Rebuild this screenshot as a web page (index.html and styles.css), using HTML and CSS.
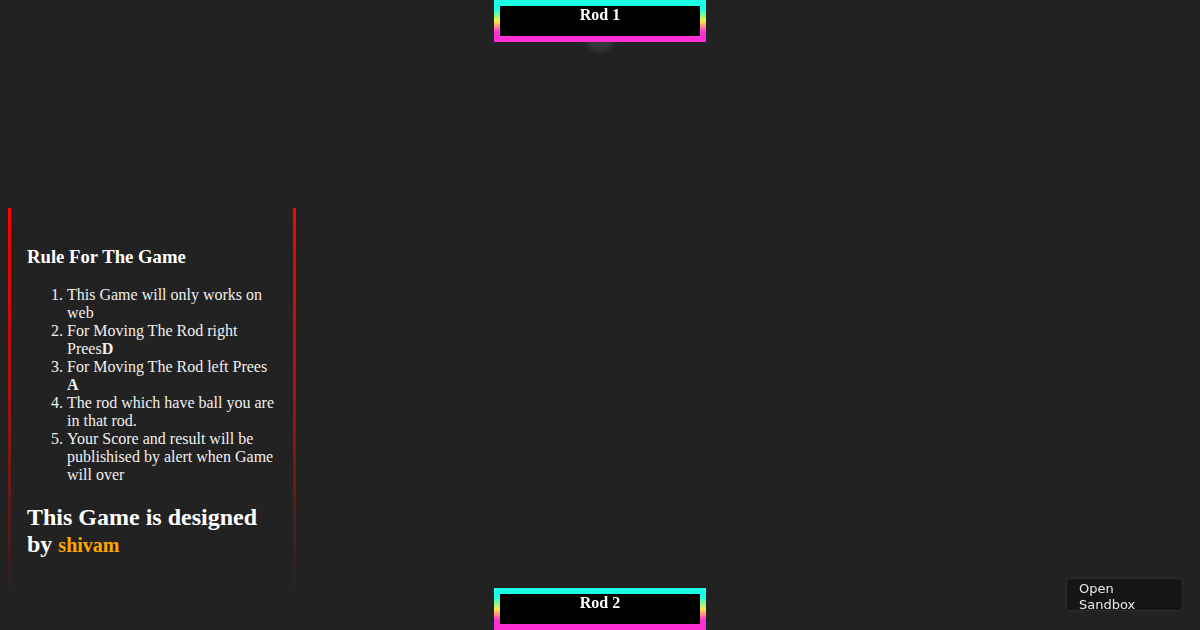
FILE: index.html
```html
<!DOCTYPE html>
<html lang="en">
<head>
<meta charset="utf-8">
<title>Ping Pong</title>
<link rel="stylesheet" href="styles.css">
</head>
<body>
<div class="game">
  <div class="ball"></div>
  <div class="rod rod-top">Rod 1</div>
  <div class="rod rod-bottom">Rod 2</div>
</div>
<section class="rules">
  <h3 class="rules-title">Rule For The Game</h3>
  <ol class="rules-list">
    <li>This Game will only works on web</li>
    <li>For Moving The Rod right Prees<b>D</b></li>
    <li>For Moving The Rod left Prees <b>A</b></li>
    <li>The rod which have ball you are in that rod.</li>
    <li>Your Score and result will be publishised by alert when Game will over</li>
  </ol>
  <h2 class="credit">This Game is designed by <span class="author">shivam</span></h2>
</section>
<a class="sandbox-btn" href="#"><span class="sandbox-label">Open Sandbox</span></a>
</body>
</html>
```
FILE: styles.css
```css
html, body {
  height: 100%;
}
body {
  margin: 0;
  padding: 208px 0 0 8px;
  box-sizing: border-box;
  background: #222222;
  color: #ffffff;
  font-family: "Liberation Serif", "Times New Roman", serif;
  overflow: hidden;
}
.game {
  position: fixed;
  inset: 0;
  pointer-events: none;
}
.rod {
  position: absolute;
  left: 494px;
  width: 200px;
  height: 30px;
  border: 6px solid transparent;
  border-image: linear-gradient(to bottom, #1affe6 0%, #1affe6 15%, #fff03a 50%, #ff2fd6 85%, #ff2fd6 100%) 1;
  background: #000000;
  color: #ffffff;
  font-weight: bold;
  font-size: 16px;
  text-align: center;
  line-height: 18px;
  z-index: 2;
}
.rod-top {
  top: 0;
}
.rod-bottom {
  bottom: 0;
}
.ball {
  position: absolute;
  left: 586px;
  top: 20px;
  width: 28px;
  height: 28px;
  border-radius: 50%;
  background: #343a3a;
  box-shadow: 0 0 6px 3px rgba(150, 170, 170, 0.18);
  z-index: 1;
}
.rules {
  width: 250px;
  padding: 19px 16px 20px 16px;
  border-style: solid;
  border-width: 0 3px;
  border-image: linear-gradient(to bottom, #ff0000 0%, #b01010 45%, #222222 100%) 1;
}
.rules-title {
  font-size: 18.72px;
  margin: 18.72px 0;
}
.rules-list {
  margin: 16px 0;
  padding-left: 40px;
  font-size: 16px;
  color: #f0f0f0;
}
.credit {
  font-size: 24px;
  margin: 19.92px 0;
}
.author {
  color: #ffa500;
  font-size: 20px;
}
.sandbox-btn {
  position: fixed;
  right: 17px;
  bottom: 19px;
  width: 91px;
  height: 29px;
  padding: 2px 12px 0;
  background: #151515;
  border: 1px solid #2e2e2e;
  border-radius: 4px;
  color: #e8e8e8;
  text-decoration: none;
  font-family: "DejaVu Sans", Verdana, sans-serif;
  font-size: 13px;
  line-height: 16px;
}
.sandbox-label {
  display: block;
  width: 70px;
}
```
